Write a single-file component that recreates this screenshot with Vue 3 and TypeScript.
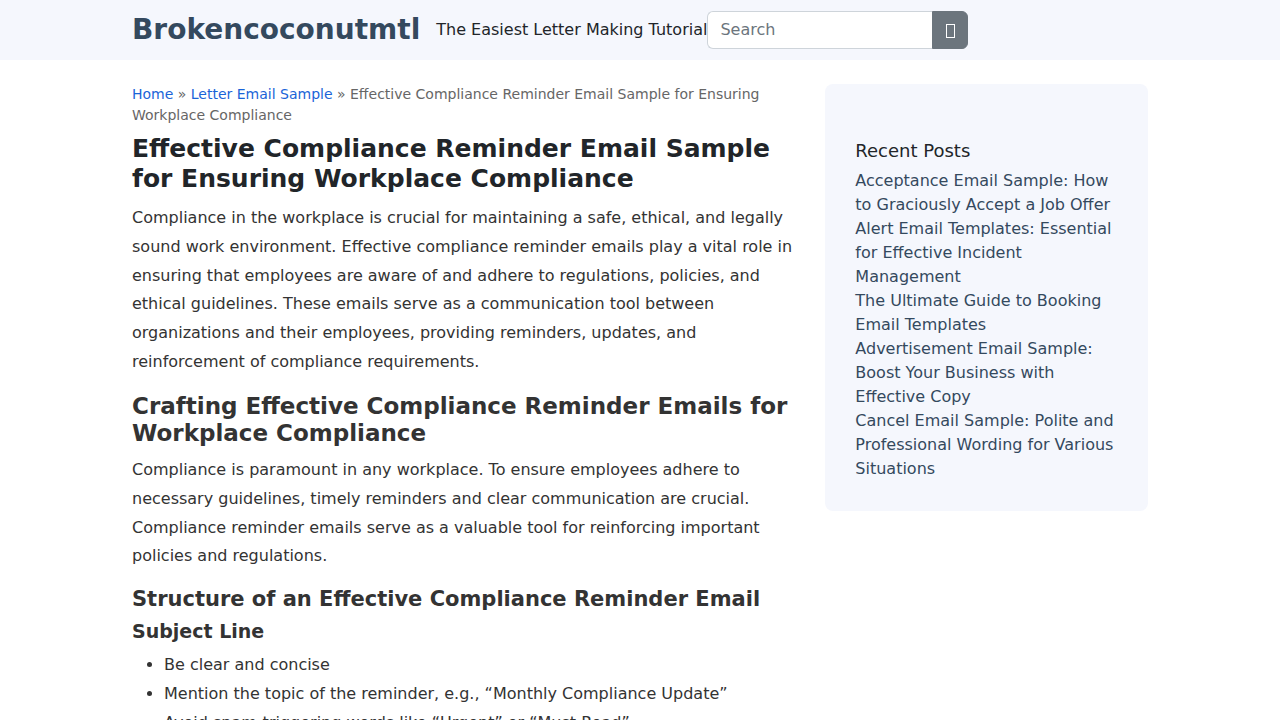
<script setup lang="ts">
import { ref } from 'vue'

const query = ref('')

const recentPosts: string[] = [
  'Acceptance Email Sample: How to Graciously Accept a Job Offer',
  'Alert Email Templates: Essential for Effective Incident Management',
  'The Ultimate Guide to Booking Email Templates',
  'Advertisement Email Sample: Boost Your Business with Effective Copy',
  'Cancel Email Sample: Polite and Professional Wording for Various Situations',
]

const subjectTips: string[] = [
  'Be clear and concise',
  'Mention the topic of the reminder, e.g., “Monthly Compliance Update”',
  'Avoid spam-triggering words like “Urgent” or “Must Read”',
]
</script>

<template>
  <div class="page">
    <header class="site-header">
      <div class="container header-inner">
        <a class="brand" href="#">Brokencoconutmtl</a>
        <span class="tagline">The Easiest Letter Making Tutorial</span>
        <form class="search" role="search" @submit.prevent>
          <input v-model="query" class="search-input" type="text" placeholder="Search" aria-label="Search" />
          <button class="search-button" type="submit" aria-label="Submit search">
            <svg width="10" height="16" viewBox="0 0 10 16" aria-hidden="true">
              <rect x="1.5" y="1.5" width="8" height="13" fill="none" stroke="currentColor" />
            </svg>
          </button>
        </form>
      </div>
    </header>

    <div class="container columns">
      <main>
        <nav class="breadcrumb" aria-label="Breadcrumb">
          <a href="#">Home</a> » <a href="#">Letter Email Sample</a> » Effective Compliance Reminder Email Sample for
          Ensuring Workplace Compliance
        </nav>
        <h1>Effective Compliance Reminder Email Sample for Ensuring Workplace Compliance</h1>
        <article class="content">
          <p>
            Compliance in the workplace is crucial for maintaining a safe, ethical, and legally sound work environment.
            Effective compliance reminder emails play a vital role in ensuring that employees are aware of and adhere to
            regulations, policies, and ethical guidelines. These emails serve as a communication tool between
            organizations and their employees, providing reminders, updates, and reinforcement of compliance
            requirements.
          </p>
          <h2>Crafting Effective Compliance Reminder Emails for Workplace Compliance</h2>
          <p>
            Compliance is paramount in any workplace. To ensure employees adhere to necessary guidelines, timely
            reminders and clear communication are crucial. Compliance reminder emails serve as a valuable tool for
            reinforcing important policies and regulations.
          </p>
          <h3>Structure of an Effective Compliance Reminder Email</h3>
          <h4>Subject Line</h4>
          <ul>
            <li v-for="tip in subjectTips" :key="tip">{{ tip }}</li>
          </ul>
        </article>
      </main>

      <aside class="sidebar">
        <h2 class="sidebar-title">Recent Posts</h2>
        <ul class="posts">
          <li v-for="post in recentPosts" :key="post">
            <a href="#">{{ post }}</a>
          </li>
        </ul>
      </aside>
    </div>
  </div>
</template>

<style>
body {
  margin: 0;
  background: #fff;
}
</style>

<style scoped>
.page,
.page * {
  box-sizing: border-box;
}

.page {
  height: 100vh;
  overflow: hidden;
  font-family: "DejaVu Sans", sans-serif;
  font-size: 16px;
  line-height: 1.5;
  color: #212529;
}

.container {
  max-width: 1040px;
  margin: 0 auto;
  padding: 0 12px;
}

.site-header {
  background: #f5f7fd;
}

.header-inner {
  display: flex;
  align-items: center;
  min-height: 60px;
}

.brand {
  margin-right: 16px;
  font-size: 28px;
  font-weight: 700;
  color: #34495e;
  text-decoration: none;
}

.search {
  display: flex;
}

.search-input {
  width: 225px;
  height: 38px;
  padding: 5px 12px 7px;
  border: 1px solid #ced4da;
  border-right: 0;
  border-radius: 6px 0 0 6px;
  background: #fff;
  color: #212529;
  font: inherit;
}

.search-input::placeholder {
  color: #6c757d;
  opacity: 1;
}

.search-button {
  display: flex;
  align-items: center;
  height: 38px;
  padding: 7px 12px 5px;
  border: 1px solid #6c757d;
  border-radius: 0 6px 6px 0;
  background: #6c757d;
  color: #fff;
  font: inherit;
}

.columns {
  display: grid;
  grid-template-columns: minmax(0, 502fr) minmax(0, 242fr);
  column-gap: 24px;
  align-items: start;
  padding-top: 24px;
}

.breadcrumb {
  margin-bottom: 8px;
  font-size: 14px;
  color: #666;
}

.breadcrumb a {
  color: #1a64d8;
  text-decoration: none;
}

h1,
h2,
h3,
h4 {
  margin: 0 0 8px;
  font-weight: 700;
  line-height: 1.2;
}

h1 {
  margin-bottom: 10px;
  font-size: 25px;
}

.content {
  line-height: 1.8;
  color: #333;
}

.content p {
  margin: 0 0 16px;
}

.content h2 {
  font-size: 23px;
}

.content h3 {
  font-size: 21px;
}

.content h4 {
  font-size: 19px;
}

.content ul {
  margin: 0 0 16px;
  padding-left: 32px;
}

.sidebar {
  padding: 56px 30px 30px;
  border-radius: 8px;
  background: #f5f7fd;
}

.sidebar-title {
  margin-bottom: 7px;
  font-size: 18px;
  font-weight: 400;
}

.posts {
  margin: 0;
  padding: 0;
  list-style: none;
}

.posts a {
  color: #34495e;
  text-decoration: none;
}
</style>
